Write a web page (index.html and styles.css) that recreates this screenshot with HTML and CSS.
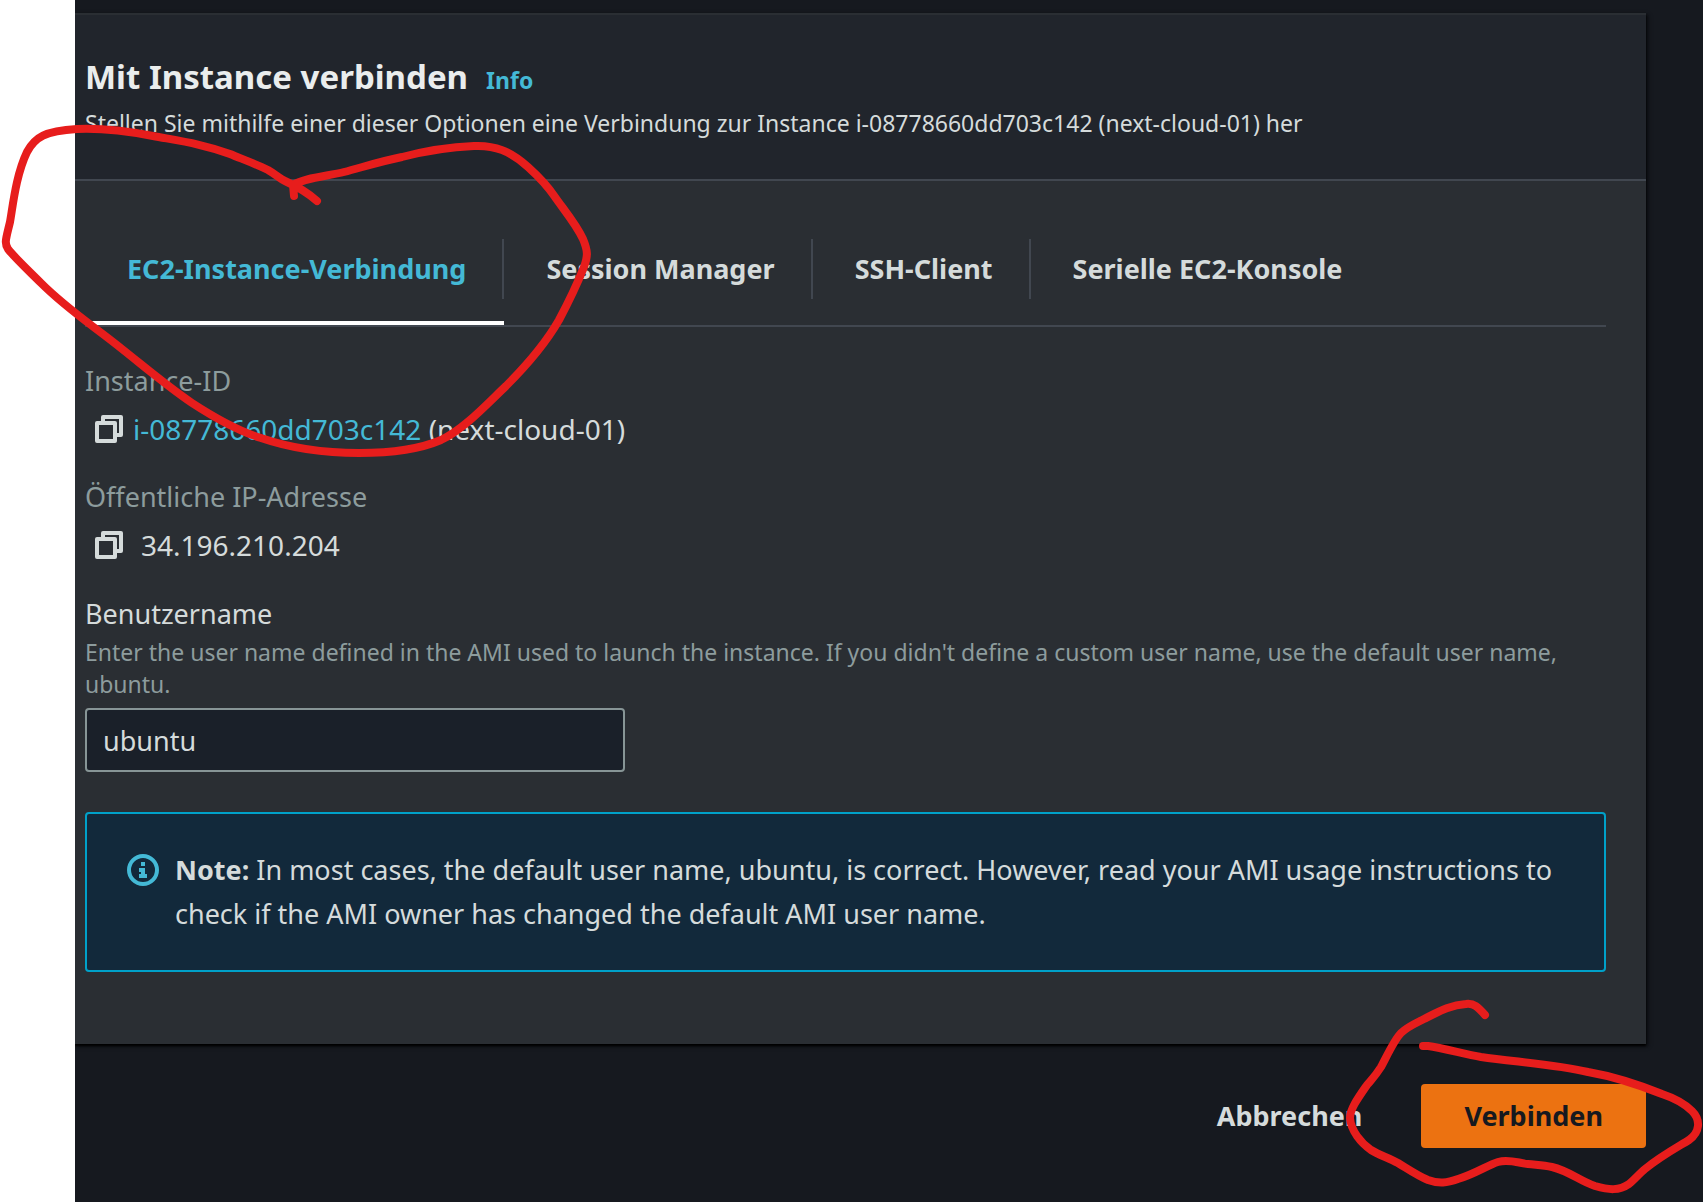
FILE: index.html
```html
<!DOCTYPE html>
<html lang="de">
<head>
<meta charset="utf-8">
<meta name="viewport" content="width=device-width, initial-scale=1">
<title>Mit Instance verbinden</title>
<link rel="stylesheet" href="styles.css">
</head>
<body>
<div class="console">
  <main class="panel">
    <header class="panel-header">
      <div class="title-row">
        <h1 class="title">Mit Instance verbinden</h1>
        <a class="info-link" href="#info">Info</a>
      </div>
      <p class="description">Stellen Sie mithilfe einer dieser Optionen eine Verbindung zur Instance i-08778660dd703c142 (next-cloud-01) her</p>
    </header>
    <div class="panel-body">
      <div class="tabs" role="tablist">
        <button class="tab tab-active" type="button" role="tab" aria-selected="true"><span class="tab-label">EC2-Instance-Verbindung</span></button>
        <button class="tab" type="button" role="tab" aria-selected="false"><span class="tab-label">Session Manager</span></button>
        <button class="tab" type="button" role="tab" aria-selected="false"><span class="tab-label">SSH-Client</span></button>
        <button class="tab" type="button" role="tab" aria-selected="false"><span class="tab-label">Serielle EC2-Konsole</span></button>
      </div>

      <dl class="details">
        <div class="detail">
          <dt class="detail-label">Instance-ID</dt>
          <dd class="detail-value">
            <button class="copy" type="button" aria-label="Instance-ID kopieren"><svg class="copy-icon" viewBox="0 0 28 28" aria-hidden="true"><path d="M2 8h18v18H2zM8 8V2h18v18h-6"/></svg></button>
            <span><a class="link" href="#instance">i-08778660dd703c142</a> (next-cloud-01)</span>
          </dd>
        </div>
        <div class="detail">
          <dt class="detail-label">Öffentliche IP-Adresse</dt>
          <dd class="detail-value detail-value-wide">
            <button class="copy" type="button" aria-label="IP-Adresse kopieren"><svg class="copy-icon" viewBox="0 0 28 28" aria-hidden="true"><path d="M2 8h18v18H2zM8 8V2h18v18h-6"/></svg></button>
            <span>34.196.210.204</span>
          </dd>
        </div>
      </dl>

      <div class="field">
        <label class="field-label" for="username">Benutzername</label>
        <p class="field-hint" id="username-hint">Enter the user name defined in the AMI used to launch the instance. If you didn't define a custom user name, use the default user name, ubuntu.</p>
        <input class="field-input" id="username" type="text" value="ubuntu" aria-describedby="username-hint">
      </div>

      <div class="note" role="note">
        <svg class="note-icon" viewBox="0 0 32 32" aria-hidden="true"><circle cx="16" cy="16" r="14"/><path d="M14 8h4v4h-4zM12 14h6v6h2v4h-8v-4h2v-2h-2z"/></svg>
        <p class="note-text"><strong>Note:</strong> In most cases, the default user name, ubuntu, is correct. However, read your AMI usage instructions to check if the AMI owner has changed the default AMI user name.</p>
      </div>
    </div>
  </main>

  <footer class="actions">
    <button class="button button-link" type="button">Abbrechen</button>
    <button class="button button-primary" type="button">Verbinden</button>
    <svg class="marker marker-connect" width="360" height="200" viewBox="1343 995 360 200" aria-hidden="true"><path d="M1485 1015C1478 1007 1474 1003 1466 1004C1451 1005 1440 1011 1424 1019C1412 1025 1407 1027 1401 1033C1394 1040 1386 1058 1381 1067C1376 1075 1373 1078 1367 1085C1358 1098 1350 1109 1350 1118C1351 1131 1361 1143 1371 1150C1379 1155 1389 1158 1398 1163C1408 1169 1418 1176 1428 1180C1439 1184 1447 1183 1458 1179C1475 1174 1488 1165 1498 1162C1509 1159 1518 1163 1528 1164C1536 1165 1543 1165 1552 1167C1569 1171 1580 1181 1595 1186C1609 1190 1619 1191 1629 1184C1634 1180 1640 1173 1645 1169C1661 1156 1676 1148 1689 1140C1700 1132 1701 1120 1692 1111C1686 1105 1674 1098 1662 1094C1642 1086 1611 1076 1588 1072C1554 1064 1515 1062 1481 1057C1464 1054 1443 1048 1428 1046L1423 1046"/></svg>
  </footer>
</div>
<svg class="marker marker-tab" width="640" height="480" viewBox="0 0 640 480" aria-hidden="true"><path d="M317 201C307 192 298 187 287 182C280 179 275 174 268 170C256 164 242 159 230 154C203 144 180 141 153 136C127 131 100 128 77 129C45 131 35 137 27 152C16 175 13 205 10 222C6 239 4 243 8 249C14 257 28 270 41 283C68 310 95 327 122 349C146 368 167 386 192 403C215 418 238 431 261 438C293 449 325 453 359 453C390 453 420 449 441 440C464 429 486 405 506 386C526 366 547 341 559 320C567 305 578 282 584 267C588 256 588 251 583 239C576 224 564 210 555 197C547 185 538 176 528 167C510 151 495 145 474 146C450 147 425 151 402 157C382 161 363 167 344 172C328 176 303 178 293 185L294 196"/></svg>
</body>
</html>
```
FILE: styles.css
```css
*,
*::before,
*::after {
  box-sizing: border-box;
}

body {
  margin: 0;
  position: relative;
  min-height: 100vh;
  background: #fff;
  color: #d5dbdb;
  font-family: "Noto Sans", "Open Sans", sans-serif;
  font-size: 27px;
  line-height: 44px;
}

h1,
p,
dl,
dd {
  margin: 0;
}

button,
input {
  font: inherit;
  color: inherit;
}

.console {
  min-height: 100vh;
  margin-left: 75px;
  margin-right: 2px;
  padding: 13px 57px 54px 0;
  overflow: clip;
  background: #16191f;
}

.panel {
  border-top: 2px solid #2a2e33;
  background: #2a2e33;
  box-shadow: 0 2px 2px #000, 2px 2px 4px #0a0c10;
}

.panel-header {
  padding: 40px 40px 40px 10px;
  border-bottom: 2px solid #414750;
  background: #21252c;
}

.title-row {
  display: flex;
  align-items: baseline;
  gap: 18px;
}

.title {
  color: #eaeded;
  font-size: 33px;
  font-weight: 700;
  line-height: 44px;
}

.info-link {
  color: #44b9d6;
  font-size: 23px;
  font-weight: 700;
  line-height: 32px;
  text-decoration: none;
}

.description {
  margin-top: 8px;
  font-size: 23px;
  line-height: 32px;
}

.panel-body {
  padding: 36px 40px 72px 10px;
}

.tabs {
  display: flex;
  border-bottom: 2px solid #414750;
}

.tab {
  padding: 22px 0;
  border: 0;
  border-bottom: 4px solid transparent;
  background: none;
  font-weight: 700;
}

.tab-label {
  display: block;
  padding: 8px 36px 8px 42px;
  border-right: 2px solid #414750;
}

.tab:last-child .tab-label {
  border-right: 0;
}

.tab-active {
  border-bottom-color: #fff;
  color: #44b9d6;
}

.details {
  display: grid;
  gap: 24px;
  padding-top: 32px;
}

.detail {
  display: grid;
  gap: 4px;
}

.detail-label {
  color: #8d9c9d;
}

.detail-value {
  display: flex;
  align-items: center;
  gap: 10px;
  padding: 0 10px;
  font-size: 28px;
}

.detail-value-wide {
  gap: 18px;
}

.copy {
  display: flex;
  padding: 0;
  border: 0;
  background: none;
}

.copy-icon {
  width: 28px;
  height: 28px;
  fill: none;
  stroke: #d5dbdb;
  stroke-width: 4;
  stroke-linejoin: round;
}

.link {
  color: #44b9d6;
  text-decoration: none;
}

.field {
  padding-top: 25px;
}

.field-label {
  display: block;
}

.field-hint {
  color: #8d9c9d;
  font-size: 23px;
  line-height: 32px;
}

.field-input {
  display: block;
  width: 540px;
  max-width: 100%;
  height: 64px;
  margin-top: 8px;
  padding: 0 16px;
  border: 2px solid #879596;
  border-radius: 4px;
  background: #1a2029;
}

.note {
  display: flex;
  gap: 16px;
  margin-top: 40px;
  padding: 34px 40px;
  border: 2px solid #00a1c9;
  border-radius: 4px;
  background: #12293b;
}

.note-icon {
  flex: none;
  width: 32px;
  height: 32px;
  margin-top: 6px;
  fill: #44b9d6;
}

.note-icon circle {
  fill: none;
  stroke: #44b9d6;
  stroke-width: 4;
}

.actions {
  position: relative;
  display: flex;
  justify-content: flex-end;
  gap: 16px;
  padding-top: 40px;
}

.button {
  height: 64px;
  padding: 0 43px;
  border: 0;
  border-radius: 4px;
  font-weight: 700;
}

.button-link {
  background: none;
}

.button-primary {
  background: #ec7211;
  color: #16191f;
}

.marker {
  position: absolute;
  fill: none;
  stroke: #e71d1c;
  stroke-width: 8;
  stroke-linecap: round;
  stroke-linejoin: round;
  pointer-events: none;
}

.marker-tab {
  top: 0;
  left: 0;
}

.marker-connect {
  top: -49px;
  right: -57px;
}
```
